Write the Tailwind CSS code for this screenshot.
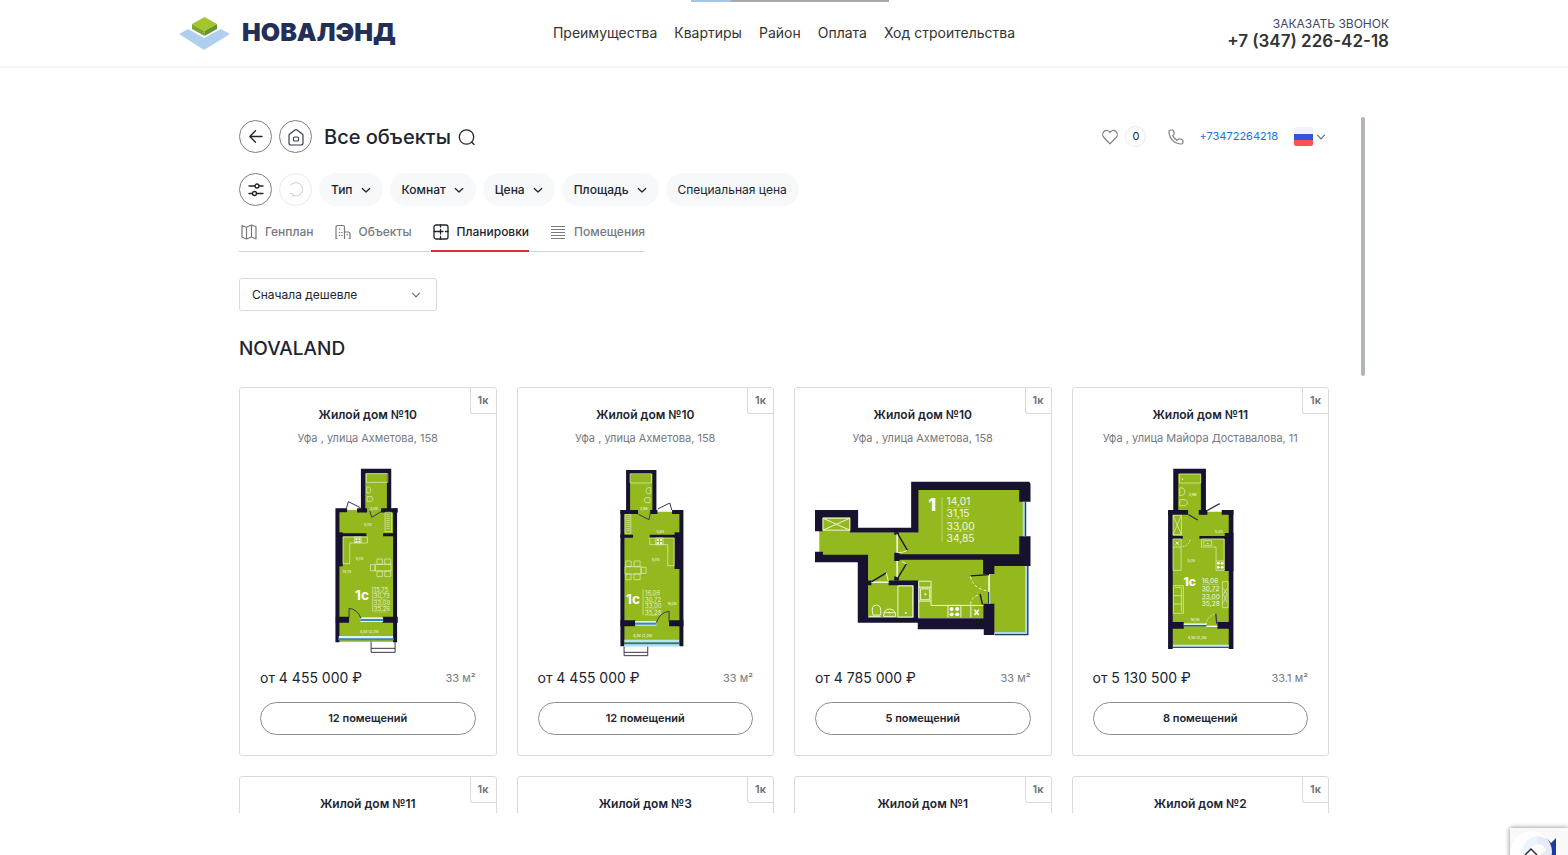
<!DOCTYPE html>
<html lang="ru">
<head>
    <meta charset="UTF-8">
    <meta name="viewport" content="width=device-width, initial-scale=1.0">
    <title>Новалэнд</title>
    <script src="https://cdn.jsdelivr.net/npm/@tailwindcss/browser@4"></script>
</head>
<body class="bg-white font-['Inter',sans-serif] text-[#20242f] h-screen overflow-hidden flex flex-col">

    <!-- Header -->
    <header class="relative h-[68px] shrink-0 border-b-2 border-[#f4f4f5]">
        <div class="absolute top-0 left-1/2 -ml-[93px] w-[198px] h-[2px] bg-[#a9a9a9]">
            <div class="w-1/5 h-full bg-[#a5c6e0]"></div>
        </div>
        <div class="max-w-[1210px] h-full mx-auto flex items-center justify-between">
            <a href="/" class="flex items-center gap-3 w-[336px]">
                <svg class="w-[51px] h-[33px]" viewBox="0 0 51 33">
                    <path d="M0 17 L9 12 L25 21 L42 12 L51 17 L25 33 Z" fill="#b0cfee"/>
                    <path d="M25.500 0 L38 7 L25.500 14 L13 7 Z" fill="#a2c62c"/>
                    <path d="M13 7 L25.500 14 V19 L13 12 Z" fill="#7fa52c"/>
                    <path d="M38 7 L25.500 14 V19 L38 12 Z" fill="#66952c"/>
                </svg>
                <span class="text-[25px] font-black text-[#232f57]">НОВАЛЭНД</span>
            </a>
            <nav class="flex gap-[17px] text-sm text-[#333]">
                <a href="#benefits">Преимущества</a>
                <a href="#flats">Квартиры</a>
                <a href="#district">Район</a>
                <a href="#payment">Оплата</a>
                <a href="#progress">Ход строительства</a>
            </nav>
            <div class="w-[336px] flex flex-col items-end">
                <a href="#callback" class="text-xs leading-4 text-[#3d4766]">ЗАКАЗАТЬ ЗВОНОК</a>
                <a href="tel:+73472264218" class="text-[17px] leading-[18px] font-semibold text-[#333]">+7 (347) 226-42-18</a>
            </div>
        </div>
    </header>

    <!-- Catalog -->
    <main class="relative flex-1 min-h-0 w-full max-w-[1162px] mx-auto mt-[49px] mb-[42px] px-9 pt-[3px] overflow-hidden">
        <div class="absolute right-0 top-0 w-[4px] h-[259px] rounded bg-[#b1b4b8]"></div>

        <div class="flex items-center justify-between">
            <div class="flex items-center gap-[7px]">
                <button aria-label="Назад" class="size-[33px] rounded-full border border-[#7c7e84] flex items-center justify-center">
                    <svg class="size-[16px]" viewBox="0 0 16 16" fill="none" stroke="#20242f" stroke-width="1.300" stroke-linecap="round" stroke-linejoin="round"><path d="M14 7.500H2M7.500 1.700L1.800 7.500l5.700 5.800"/></svg>
                </button>
                <button aria-label="Главная" class="size-[33px] rounded-full border border-[#7c7e84] flex items-center justify-center">
                    <svg class="size-[18px]" viewBox="0 0 18 18" fill="none" stroke="#3a3e49" stroke-width="1.200" stroke-linejoin="round"><path d="M2 7.200Q2 6.400 2.700 5.900L8 2Q9 1.300 10 2l5.300 3.900q.7.500.7 1.300V15q0 2-2 2H4q-2 0-2-2z"/><rect x="6.500" y="9" width="5" height="4" rx="1"/></svg>
                </button>
                <h1 class="ml-[5px] text-xl leading-7 font-medium">Все объекты</h1>
                <button aria-label="Поиск">
                    <svg class="size-[18px]" viewBox="0 0 18 18" fill="none" stroke="#20242f" stroke-width="1.300" stroke-linecap="round"><circle cx="8.500" cy="9" r="7.200"/><path d="M13.800 14.300L16.100 16.500"/></svg>
                </button>
            </div>
            <div class="flex items-center text-[11px]">
                <svg class="size-[16px]" viewBox="0 0 16 16" fill="none" stroke="#7c7e84" stroke-width="1.200" stroke-linejoin="round"><path d="M8 14.800L1.900 8.500C.3 6.700.4 4 2 2.500 3.800.8 6.500 1.200 8 3.400 9.500 1.200 12.200.8 14 2.500c1.600 1.500 1.700 4.200.1 6z"/></svg>
                <span class="ml-[7px] size-[21px] rounded-full border border-[#e6e8ec] flex items-center justify-center">0</span>
                <svg class="ml-[22px] size-[16px]" viewBox="0 0 16 16" fill="none" stroke="#7c7e84" stroke-width="1.200" stroke-linejoin="round"><path d="M1 2.800Q1 1 2.800 1h1.400q.9 0 1.200.9l.8 2.400q.2.800-.4 1.300l-1.200 1q1.500 3.200 4.700 4.800l1.100-1.200q.5-.6 1.300-.4l2.400.7q.9.300.9 1.200v1.500q0 1.800-1.800 1.800C6.600 15 1 9.400 1 2.800z"/></svg>
                <a href="tel:+73472264218" class="ml-[15px] text-[#1277e1]">+73472264218</a>
                <button aria-label="Язык" class="ml-4 mr-[3px] flex items-center gap-[3px]">
                    <svg class="w-[19px] h-[19px]" viewBox="0 0 19 19"><rect width="19" height="19" rx="2" fill="#f1f2f8"/><path d="M0 7h19v6H0z" fill="#2c58d3"/><path d="M0 13h19v4q0 2-2 2H2q-2 0-2-2z" fill="#fa5252"/></svg>
                    <svg class="size-[10px]" viewBox="0 0 10 10" fill="none" stroke="#6b6e76" stroke-width="1.200" stroke-linecap="round" stroke-linejoin="round"><path d="M1.500 3.200L5 6.800l3.500-3.600"/></svg>
                </button>
            </div>
        </div>

        <!-- Filters -->
        <div class="mt-5 flex items-center gap-[7px] text-xs font-medium">
            <button aria-label="Фильтры" class="size-[33px] rounded-full border border-[#7c7e84] flex items-center justify-center">
                <svg class="size-[16px]" viewBox="0 0 16 16" fill="none" stroke="#20242f" stroke-width="1.300" stroke-linecap="round"><path d="M1 4h6M11 4h4M1 11.500h3.500M8.500 11.500H15"/><circle cx="9" cy="4" r="2"/><circle cx="6.500" cy="11.500" r="2"/></svg>
            </button>
            <button aria-label="Сбросить" class="size-[33px] rounded-full border border-[#e8e9eb] flex items-center justify-center">
                <svg class="size-[16px]" viewBox="0 0 16 16" fill="none" stroke="#d5d7da" stroke-width="1.100" stroke-linecap="round" stroke-linejoin="round"><path d="M3 2.800C6-.3 10.500.1 13 3c2.500 3 2 7.500-1.300 9.800-2 1.400-5 1.500-7.200 0M1.500 11.500h3.200v3.200"/></svg>
            </button>
            <button class="h-[33px] px-3 rounded-full bg-[#f7f8fa] flex items-center gap-2">Тип
                <svg class="size-[10px]" viewBox="0 0 10 10" fill="none" stroke="#20242f" stroke-width="1.300" stroke-linecap="round" stroke-linejoin="round"><path d="M1.300 3.500L5 7l3.700-3.500"/></svg>
            </button>
            <button class="h-[33px] px-3 rounded-full bg-[#f7f8fa] flex items-center gap-2">Комнат
                <svg class="size-[10px]" viewBox="0 0 10 10" fill="none" stroke="#20242f" stroke-width="1.300" stroke-linecap="round" stroke-linejoin="round"><path d="M1.300 3.500L5 7l3.700-3.500"/></svg>
            </button>
            <button class="h-[33px] px-3 rounded-full bg-[#f7f8fa] flex items-center gap-2">Цена
                <svg class="size-[10px]" viewBox="0 0 10 10" fill="none" stroke="#20242f" stroke-width="1.300" stroke-linecap="round" stroke-linejoin="round"><path d="M1.300 3.500L5 7l3.700-3.500"/></svg>
            </button>
            <button class="h-[33px] px-3 rounded-full bg-[#f7f8fa] flex items-center gap-2">Площадь
                <svg class="size-[10px]" viewBox="0 0 10 10" fill="none" stroke="#20242f" stroke-width="1.300" stroke-linecap="round" stroke-linejoin="round"><path d="M1.300 3.500L5 7l3.700-3.500"/></svg>
            </button>
            <button class="h-[33px] px-3 rounded-full bg-[#f7f8fa] font-normal">Специальная цена</button>
        </div>

        <!-- Tabs -->
        <div class="mt-[7px] w-fit flex gap-[19px] border-b border-[#cdd6dd] text-xs font-medium text-[#77797f]">
            <a href="#genplan" class="h-[38px] flex items-center gap-2 pl-[2px]">
                <svg class="size-[16px]" viewBox="0 0 16 16" fill="none" stroke="#77797f" stroke-width="1.200" stroke-linejoin="round"><path d="M1 1.500L5.500 3.200 10.500 1 15 2.800v12L10.500 13 5.500 15 1 13.200zM5.500 3.200V15M10.500 1v12"/></svg>
                Генплан
            </a>
            <a href="#objects" class="h-[38px] flex items-center gap-2 pl-[2px]">
                <svg class="size-[16px]" viewBox="0 0 16 16" fill="none" stroke="#77797f" stroke-width="1.200" stroke-linecap="round" stroke-linejoin="round"><path d="M2 14.500H1V3q0-1.500 1.500-1.500H8Q9.500 1.500 9.500 3v11.500M9.500 8H13q2 0 2 2v4.500h-1"/><path d="M4.500 5h.1M4.500 8.500h.1M7 11.500h.1M7 8.500h.1M4.500 11.500h.1M12.200 11h.1" stroke-width="1.400"/></svg>
                Объекты
            </a>
            <a href="#plans" class="-mb-px h-[39px] flex items-center gap-2 pl-[2px] border-b-2 border-[#dc3038] text-[#20242f]">
                <svg class="size-[16px]" viewBox="0 0 16 16" fill="none" stroke="#20242f" stroke-width="1.300" stroke-linecap="round"><rect x="1" y="1" width="14" height="14" rx="2"/><path d="M7.500 1v2M7.500 5.500v4.500M1 7.500h9M12.500 7.500H15M7.500 12.500V15"/></svg>
                Планировки
            </a>
            <a href="#rooms" class="h-[38px] flex items-center gap-2 pl-[2px]">
                <svg class="size-[16px]" viewBox="0 0 16 16" fill="none" stroke="#77797f" stroke-width="1.200"><path d="M1 2.500h14M1 5.500h14M1 8.500h14M1 11.500h14M1 14.500h14"/></svg>
                Помещения
            </a>
        </div>

        <div class="relative mt-[26px] w-[198px]">
            <select aria-label="Сортировка" class="appearance-none w-full h-[33px] px-3 rounded-[3px] border border-[#d5dbe1] bg-white text-xs">
                <option>Сначала дешевле</option>
                <option>Сначала дороже</option>
            </select>
            <svg class="absolute right-4 top-3 size-[10px] pointer-events-none" viewBox="0 0 10 10" fill="none" stroke="#6b6e76" stroke-width="1.200" stroke-linecap="round" stroke-linejoin="round"><path d="M1.500 3.200L5 6.800l3.500-3.600"/></svg>
        </div>

        <h2 class="mt-6 mb-6 text-[19px] leading-7 font-medium">NOVALAND</h2>

        <div class="grid grid-cols-4 gap-5">
            <article class="relative border border-[#d5dbe1] rounded-[3px] px-5 pt-[17px] pb-5">
                <span class="absolute top-0 right-0 w-[26px] h-[26px] border-l border-b border-[#d5dbe1] rounded-bl-[3px] flex items-center justify-center text-[11px] font-semibold text-[#6b6e76]">1к</span>
                <h3 class="text-center text-xs leading-5 font-semibold">Жилой дом №10</h3>
                <p class="mt-[3px] text-center text-[11px] leading-5 text-[#77797f]">Уфа , улица Ахметова, 158</p>
                <svg class="mt-[7px] w-full h-[210px]" viewBox="-6 0 300 630">
                    <path d="M130 50H208V165H225V560H55V165H130z" fill="#93b91e"/>
                    <path d="M130 172V48H208V172M112 166h30M184 166h50" fill="none" stroke="#17122f" stroke-width="13"/>
                    <path d="M82 166H53V562M53 232V334M226 160V562" fill="none" stroke="#17122f" stroke-width="12"/>
                    <path d="M60 232V334" stroke="#17122f" stroke-width="18"/>
                    <path d="M50 239H140M190 239H230" stroke="#17122f" stroke-width="9"/>
                    <path d="M48 494H88M188 494H234" stroke="#17122f" stroke-width="18"/>
                    <path d="M57 547H220" stroke="#dff2ff" stroke-width="8"/><path d="M55 553H222" stroke="#3487bd" stroke-width="6"/>
                    <path d="M122 494h68" stroke="#dff2ff" stroke-width="14"/><path d="M122 495h68" stroke="#3487bd" stroke-width="6"/>
                    <path d="M80 160L86 140 122 158M150 168L156 187 184 170M88 488V460Q112 462 124 490M154 560V592H226V560M154 580H226" fill="none" stroke="#393650" stroke-width="3"/>
                    <g fill="none" stroke="#e8f0cc" stroke-width="2">
                        <path d="M140 56h64v26h-64zM141 96q12-2 12 9t-12 9zM142 125h14q8 7 0 14h-14zM196 172h19v58h-19zM200 178h10M200 184h10M200 190h10M200 196h10M200 202h10M200 208h10M200 214h10M200 220h10"/>
                        <path d="M70 246h73v18H90v62H70zM104 246h20v17h-20z"/>
                        <path d="M166 328h48v20h-48zM152 329h14v18h-14zM172 312h16v16h-16zM195 312h18v16h-18zM172 348h16v17h-16zM195 348h18v17h-18zM159 394v76"/>
                        <path d="M163 413h38M163 433h38M163 453h38M163 471h38" stroke-width="1"/>
                    </g>
                    <path d="M107 250h6v5h-6zM116 250h6v5h-6zM107 257h6v5h-6zM116 257h6v5h-6z" fill="#fff"/>
                    <g fill="#fff" font-size="11"><text x="151" y="164">4,08</text><text x="133" y="214">5,05</text><text x="108" y="315">5,05</text><text x="68" y="355">15,75</text><text x="120" y="534">4,50 (2,25)</text></g>
                    <g fill="#e8f0cc" font-size="18"><text x="162" y="411">15,75</text><text x="162" y="430">30,73</text><text x="162" y="450">33,00</text><text x="162" y="469">35,26</text></g>
                    <text x="106" y="436" font-size="41" font-weight="700" fill="#fff">1с</text>
                </svg>
                <div class="mt-[3px] flex items-center justify-between leading-5">
                    <p class="text-sm leading-5">от 4 455 000 ₽</p>
                    <p class="text-[11px] leading-5 text-[#77797f]">33 м²</p>
                </div>
                <button class="mt-[14px] w-full h-[33px] rounded-full border border-[#8b8d93] text-[11px] font-semibold">12 помещений</button>
            </article>

            <article class="relative border border-[#d5dbe1] rounded-[3px] px-5 pt-[17px] pb-5">
                <span class="absolute top-0 right-0 w-[26px] h-[26px] border-l border-b border-[#d5dbe1] rounded-bl-[3px] flex items-center justify-center text-[11px] font-semibold text-[#6b6e76]">1к</span>
                <h3 class="text-center text-xs leading-5 font-semibold">Жилой дом №10</h3>
                <p class="mt-[3px] text-center text-[11px] leading-5 text-[#77797f]">Уфа , улица Ахметова, 158</p>
                <svg class="mt-[7px] w-full h-[210px]" viewBox="-14 0 300 630">
                    <path d="M83 50H162V170H242V570H66V170H83z" fill="#93b91e"/>
                    <path d="M83 175V51H162V175M60 171h53M149 171h22" fill="none" stroke="#17122f" stroke-width="12"/>
                    <path d="M66 165V574M215 171H243V574" fill="none" stroke="#17122f" stroke-width="12"/>
                    <path d="M235 232V342" stroke="#17122f" stroke-width="25"/>
                    <path d="M60 244H98M148 244H240" stroke="#17122f" stroke-width="9"/>
                    <path d="M60 505H105M206 505H249" stroke="#17122f" stroke-width="18"/>
                    <path d="M72 558H236M72 571H236" stroke="#b9e3f5" stroke-width="8"/><path d="M72 565H236" stroke="#2d70ad" stroke-width="5"/>
                    <path d="M104 505h64" stroke="#dff2ff" stroke-width="14"/><path d="M104 506h64" stroke="#3487bd" stroke-width="6"/>
                    <path d="M172 162L208 144 214 165M114 178L146 194 150 172M206 500V469Q178 472 168 503M71 575V602H142V575M71 592H142" fill="none" stroke="#393650" stroke-width="3"/>
                    <g fill="none" stroke="#e8f0cc" stroke-width="2">
                        <path d="M89 56h64v28H89zM151 98q-14-2-14 9t14 9zM149 128h-14q-8 8 0 15h14zM74 179h17v56H74zM78 185h10M78 191h10M78 197h10M78 203h10M78 209h10M78 215h10M78 221h10M78 227h10"/>
                        <path d="M148 249h73v83h-19V269h-54zM166 249h22v20h-22z"/>
                        <path d="M74 335h48v22H74zM122 337h15v18h-15zM76 318h16v17H76zM101 318h18v17h-18zM76 357h16v17H76zM101 357h18v17h-18zM128 403v78"/>
                        <path d="M134 422h38M134 443h38M134 462h38M134 481h38" stroke-width="1"/>
                    </g>
                    <path d="M169 252h6v6h-6zM179 252h6v6h-6zM169 261h6v6h-6zM179 261h6v6h-6z" fill="#fff"/>
                    <g fill="#fff" font-size="11"><text x="119" y="166">3,98</text><text x="168" y="234">5,83</text><text x="154" y="319">5,05</text><text x="201" y="450">16,06</text><text x="98" y="547">4,56 (2,28)</text></g>
                    <g fill="#e8f0cc" font-size="18"><text x="134" y="420">16,06</text><text x="134" y="440">30,72</text><text x="134" y="460">33,00</text><text x="134" y="479">35,28</text></g>
                    <text x="77" y="446" font-size="41" font-weight="700" fill="#fff">1с</text>
                </svg>
                <div class="mt-[3px] flex items-center justify-between leading-5">
                    <p class="text-sm leading-5">от 4 455 000 ₽</p>
                    <p class="text-[11px] leading-5 text-[#77797f]">33 м²</p>
                </div>
                <button class="mt-[14px] w-full h-[33px] rounded-full border border-[#8b8d93] text-[11px] font-semibold">12 помещений</button>
            </article>

            <article class="relative border border-[#d5dbe1] rounded-[3px] px-5 pt-[17px] pb-5">
                <span class="absolute top-0 right-0 w-[26px] h-[26px] border-l border-b border-[#d5dbe1] rounded-bl-[3px] flex items-center justify-center text-[11px] font-semibold text-[#6b6e76]">1к</span>
                <h3 class="text-center text-xs leading-5 font-semibold">Жилой дом №10</h3>
                <p class="mt-[3px] text-center text-[11px] leading-5 text-[#77797f]">Уфа , улица Ахметова, 158</p>
                <svg class="mt-[7px] w-full h-[210px]" viewBox="42 -45 650 630">
                    <path d="M55 142H148V186H352V57H676V290H682V490H582V445H202V255H55z" fill="#93b91e"/>
                    <path d="M42 119H172V173H332V34H688L692 40V94H658V59H354V187H148V142H65V183H42z" fill="#17122f"/>
                    <path d="M42 245H66V254H202V332H212V346H202V444H340V346H264V332H353V446H550V402H583V496H551V479H352V459H171V277H42z" fill="#17122f"/>
                    <path d="M281 248H297V253H658V198H692V288H583V312H549V269H297V273H281zM281 320h14v12h-14zM281 186h14v8h-14z" fill="#17122f"/>
                    <path d="M673 94V198M680 288V492H584" fill="none" stroke="#acd7ee" stroke-width="9"/>
                    <path d="M677 94V198M684 288V495H584" fill="none" stroke="#21375c" stroke-width="4"/>
                    <path d="M566 366V402" stroke="#acd7ee" stroke-width="9"/><path d="M565 366V402" stroke="#21375c" stroke-width="4"/>
                    <path d="M290 192V248M290 273V322M212 337H264M567 312V366" stroke="#f5f9e6" stroke-width="5"/>
                    <path d="M292 192L321 241M318 281L292 324M212 336L257 309M511 318L567 314M540 372L547 404" stroke="#17122f" stroke-width="4"/>
                    <g fill="none" stroke="#eef5d9" stroke-width="3">
                        <path d="M66 144h81v36H66zM66 144l81 36M66 180l81-36M292 248q16 0 28-7M318 281l-14-6M257 309l6 24"/>
                        <path d="M292 348h45v94h-45zM205 440h35M217 436q-8-30 10-30t12 30zM249 440q0-22 18-22t18 22zM249 429h36"/>
                        <path d="M355 334h37v73h158M355 334v110M355 352h37M355 394h37M360 357h28v33h-28zM443 407v36M482 407v36M512 407v36M443 407h39"/>
                        <path d="M511 320q8 38 56 44M511 404q4-26 30-30" stroke-dasharray="8 7"/>
                    </g>
                    <path d="M425 80V214" stroke="#d5e3a2" stroke-width="2"/>
                    <path d="M439 112h68M439 146h66M439 184h82" stroke="#d5e3a2" stroke-width="1"/>
                    <g fill="#fff"><circle cx="316" cy="430" r="3"/><circle cx="375" cy="373" r="3"/><circle cx="266" cy="428" r="3"/><circle cx="454" cy="418" r="6"/><circle cx="471" cy="418" r="6"/><circle cx="454" cy="434" r="6"/><circle cx="471" cy="434" r="6"/></g>
                    <path d="M523 420l13 16M536 420l-13 16" stroke="#fff" stroke-width="5"/>
                    <text x="384" y="122" font-size="54" font-weight="800" fill="#fff">1</text>
                    <g fill="#f3f8e2" font-size="31"><text x="439" y="105">14,01</text><text x="439" y="141">31,15</text><text x="439" y="179">33,00</text><text x="439" y="215">34,85</text></g>
                </svg>
                <div class="mt-[3px] flex items-center justify-between leading-5">
                    <p class="text-sm leading-5">от 4 785 000 ₽</p>
                    <p class="text-[11px] leading-5 text-[#77797f]">33 м²</p>
                </div>
                <button class="mt-[14px] w-full h-[33px] rounded-full border border-[#8b8d93] text-[11px] font-semibold">5 помещений</button>
            </article>

            <article class="relative border border-[#d5dbe1] rounded-[3px] px-5 pt-[17px] pb-5">
                <span class="absolute top-0 right-0 w-[26px] h-[26px] border-l border-b border-[#d5dbe1] rounded-bl-[3px] flex items-center justify-center text-[11px] font-semibold text-[#6b6e76]">1к</span>
                <h3 class="text-center text-xs leading-5 font-semibold">Жилой дом №11</h3>
                <p class="mt-[3px] text-center text-[11px] leading-5 text-[#77797f]">Уфа , улица Майора Доставалова, 11</p>
                <svg class="mt-[7px] w-full h-[210px]" viewBox="0 0 300 630">
                    <path d="M74 48H158V170H242V578H58V170H74z" fill="#93b91e"/>
                    <path d="M75 178V49H158V178" fill="none" stroke="#17122f" stroke-width="15"/>
                    <path d="M59 165V582M241 165V582" fill="none" stroke="#17122f" stroke-width="14"/>
                    <path d="M52 172H112M144 172H170M213 172H248" stroke="#17122f" stroke-width="14"/>
                    <path d="M235 234V348" stroke="#17122f" stroke-width="26"/>
                    <path d="M60 247H96M146 247H240" stroke="#17122f" stroke-width="8"/>
                    <path d="M60 511H99M200 511H246" stroke="#17122f" stroke-width="20"/>
                    <path d="M67 573H234" stroke="#c9e6f5" stroke-width="7"/><path d="M67 577H234" stroke="#23509b" stroke-width="4"/>
                    <path d="M99 508h68" stroke="#dff2ff" stroke-width="6"/><path d="M99 512h68" stroke="#2459a1" stroke-width="4"/><path d="M167 514h33" stroke="#fff" stroke-width="4"/>
                    <path d="M170 166L207 146M113 179L141 195M198 506L195 476" fill="none" stroke="#393650" stroke-width="4"/>
                    <path d="M166 508Q170 482 195 476M96 275Q114 272 118 254" fill="none" stroke="#fff" stroke-width="2" stroke-dasharray="5 4"/>
                    <g fill="none" stroke="#e8f0cc" stroke-width="2">
                        <path d="M86 57h64v27H86zM87 98q15 0 15 12T87 122zM87 134h17q12 9 0 18H87zM67 181h25v58H67zM67 181l25 58M92 181l-25 58"/>
                        <path d="M67 252h24v94H67zM67 276h24M152 252h68v94h-24V276h-44zM159 257h24v14h-24zM196 318h24"/>
                        <path d="M68 392h30v83H68zM72 397h20v73M68 422h25M68 447h25M215 380h17v78h-17zM218 400l11 18-11 24M229 400l-11 18 11 24"/>
                        <path d="M154 388h50M154 410h50M154 434h50" stroke-width="1"/>
                    </g>
                    <g fill="#fff"><circle cx="203" cy="325" r="4"/><circle cx="214" cy="325" r="4"/><circle cx="203" cy="337" r="4"/><circle cx="214" cy="337" r="4"/><circle cx="171" cy="265" r="2"/><circle cx="95" cy="72" r="2"/></g>
                    <path d="M75 260l9 9M84 260l-9 9" stroke="#fff" stroke-width="3"/>
                    <g fill="#fff" font-size="11"><text x="114" y="123">3,98</text><text x="193" y="235">5,83</text><text x="110" y="321">5,05</text><text x="119" y="499">16,06</text><text x="111" y="551">4,56 (2,28)</text></g>
                    <g fill="#f3f8e2" font-size="20"><text x="153" y="384">16,06</text><text x="153" y="407">30,72</text><text x="153" y="431">33,00</text><text x="153" y="454">35,28</text></g>
                    <text x="98" y="392" font-size="36" font-weight="800" fill="#fff">1с</text>
                </svg>
                <div class="mt-[3px] flex items-center justify-between leading-5">
                    <p class="text-sm leading-5">от 5 130 500 ₽</p>
                    <p class="text-[11px] leading-5 text-[#77797f]">33.1 м²</p>
                </div>
                <button class="mt-[14px] w-full h-[33px] rounded-full border border-[#8b8d93] text-[11px] font-semibold">8 помещений</button>
            </article>

            <article class="relative h-[369px] border border-[#d5dbe1] rounded-[3px] px-5 pt-[17px]">
                <span class="absolute top-0 right-0 w-[26px] h-[26px] border-l border-b border-[#d5dbe1] rounded-bl-[3px] flex items-center justify-center text-[11px] font-semibold text-[#6b6e76]">1к</span>
                <h3 class="text-center text-xs leading-5 font-semibold">Жилой дом №11</h3>
            </article>
            <article class="relative h-[369px] border border-[#d5dbe1] rounded-[3px] px-5 pt-[17px]">
                <span class="absolute top-0 right-0 w-[26px] h-[26px] border-l border-b border-[#d5dbe1] rounded-bl-[3px] flex items-center justify-center text-[11px] font-semibold text-[#6b6e76]">1к</span>
                <h3 class="text-center text-xs leading-5 font-semibold">Жилой дом №3</h3>
            </article>
            <article class="relative h-[369px] border border-[#d5dbe1] rounded-[3px] px-5 pt-[17px]">
                <span class="absolute top-0 right-0 w-[26px] h-[26px] border-l border-b border-[#d5dbe1] rounded-bl-[3px] flex items-center justify-center text-[11px] font-semibold text-[#6b6e76]">1к</span>
                <h3 class="text-center text-xs leading-5 font-semibold">Жилой дом №1</h3>
            </article>
            <article class="relative h-[369px] border border-[#d5dbe1] rounded-[3px] px-5 pt-[17px]">
                <span class="absolute top-0 right-0 w-[26px] h-[26px] border-l border-b border-[#d5dbe1] rounded-bl-[3px] flex items-center justify-center text-[11px] font-semibold text-[#6b6e76]">1к</span>
                <h3 class="text-center text-xs leading-5 font-semibold">Жилой дом №2</h3>
            </article>
        </div>
    </main>

    <!-- Captcha badge and scroll to top -->
    <div class="fixed right-0 -bottom-[33px] w-[58px] h-[60px] bg-[#f9f9f9] shadow-[0_0_5px_gray] overflow-hidden">
        <svg class="absolute left-3 top-2 size-[36px]" viewBox="0 0 36 36"><path d="M34 2V20H18L24 14Q21 8 15 8V0Q24 0 29 7z" fill="#1c3aa9"/><path d="M15 0V8Q8 9 7 18H0Q0 3 15 0z" fill="#4285f4"/></svg>
        <button aria-label="Наверх" class="absolute left-0 top-[3px] size-[42px] rounded-full bg-white/90 shadow-sm flex items-center justify-center">
            <svg class="w-[14px] h-[8px]" viewBox="0 0 14 8" fill="none" stroke="#333" stroke-width="1.500"><path d="M1 7l6-6 6 6"/></svg>
        </button>
    </div>
</body>
</html>
